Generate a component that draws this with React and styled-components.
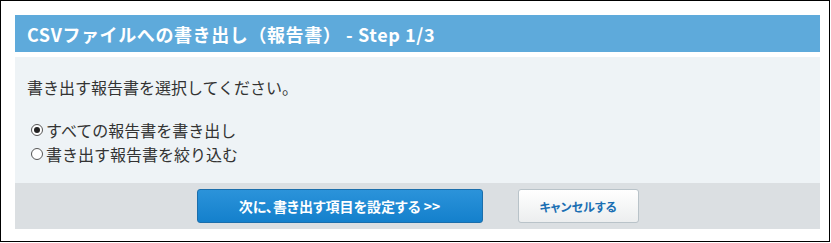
import React, { useState } from 'react'
import styled, { createGlobalStyle } from 'styled-components'

const GlobalStyle = createGlobalStyle`
  html, body {
    margin: 0;
    padding: 0;
    background: #ffffff;
  }
  body {
    font-family: "Noto Sans CJK JP", "Noto Sans", sans-serif;
  }
`;

const options = [
  { id: 'all', label: 'すべての報告書を書き出し' },
  { id: 'filter', label: '書き出す報告書を絞り込む' },
];

export default function App() {
  const [selected, setSelected] = useState('all');

  return (
    <>
      <GlobalStyle />
      <Frame>
        <Title>CSVファイルへの書き出し（報告書） - Step 1/3</Title>
        <Panel>
          <Lead>書き出す報告書を選択してください。</Lead>
          <RadioList>
            {options.map((opt) => (
              <RadioRow key={opt.id} onClick={() => setSelected(opt.id)}>
                <RadioMark $checked={selected === opt.id} />
                {opt.label}
              </RadioRow>
            ))}
          </RadioList>
        </Panel>
        <Footer>
          <Button $primary>次に、書き出す項目を設定する &gt;&gt;</Button>
          <Button>キャンセルする</Button>
        </Footer>
      </Frame>
    </>
  );
}

const Frame = styled.div`
  box-sizing: border-box;
  width: 830px;
  height: 242px;
  border: 1px solid #000;
  padding: 14px 9px 11px 14px;
  display: flex;
  flex-direction: column;
`;

const Title = styled.h1`
  margin: 0 0 5px;
  height: 37px;
  display: flex;
  align-items: center;
  padding-left: 12px;
  background-color: #5eaadb;
  color: #ffffff;
  font-size: 18px;
  font-weight: bold;
  letter-spacing: 0.6px;
`;

const Panel = styled.div`
  background-color: #eef3f6;
  height: 126px;
  box-sizing: border-box;
  padding: 18px 12px 0;
  color: #333333;
  font-size: 16px;
`;

const Lead = styled.p`
  margin: 0 0 19px;
  line-height: 24px;
`;

const RadioList = styled.div`
  display: flex;
  flex-direction: column;
  padding-left: 4px;
`;

const RadioRow = styled.label`
  display: flex;
  align-items: center;
  gap: 3px;
  height: 24px;
  cursor: pointer;
`;

const RadioMark = styled.span`
  box-sizing: border-box;
  width: 12px;
  height: 12px;
  border-radius: 50%;
  border: 1px solid #555;
  background: #fff;
  display: flex;
  align-items: center;
  justify-content: center;
  &::after {
    content: '';
    width: 6px;
    height: 6px;
    border-radius: 50%;
    background: #222;
    display: ${(p) => (p.$checked ? 'block' : 'none')};
  }
`;

const Footer = styled.div`
  background-color: #dbdfe2;
  height: 46px;
  display: flex;
  align-items: center;
  justify-content: center;
  gap: 35px;
`;

const Button = styled.button`
  box-sizing: border-box;
  height: 34px;
  width: ${(p) => (p.$primary ? '286px' : '121px')};
  padding: 0;
  border-radius: 3px;
  border: 1px solid ${(p) => (p.$primary ? '#1b6eab' : '#b9c3c9')};
  background: ${(p) =>
    p.$primary
      ? 'linear-gradient(#2b93da, #1480cc)'
      : 'linear-gradient(#ffffff, #eceeef)'};
  color: ${(p) => (p.$primary ? '#ffffff' : '#1b6fb3')};
  font-family: "Noto Sans CJK JP", "Noto Sans", sans-serif;
  font-feature-settings: "palt";
  font-size: ${(p) => (p.$primary ? '14px' : '12px')};
  font-weight: bold;
  cursor: pointer;
`;
